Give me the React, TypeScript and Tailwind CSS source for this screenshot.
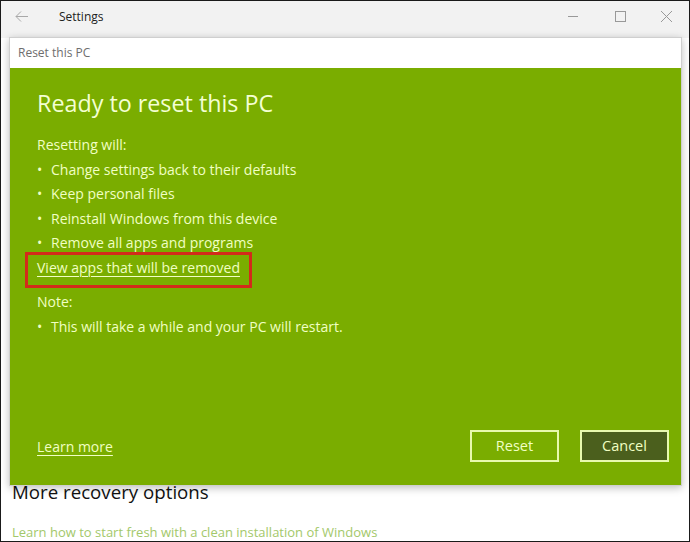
import { useState } from 'react';

const FONT = { fontFamily: '"Open Sans", "Noto Sans", sans-serif' };

const RESET_ITEMS = [
  'Change settings back to their defaults',
  'Keep personal files',
  'Reinstall Windows from this device',
  'Remove all apps and programs',
];

function Bullet({ children }: { children: React.ReactNode }) {
  return (
    <li className="flex">
      <span className="w-[14px] shrink-0">•</span>
      <span>{children}</span>
    </li>
  );
}

function TitleBar() {
  return (
    <div className="h-[37px] flex items-start bg-[#f2f2f2] shrink-0">
      <div className="h-[31px] w-full flex items-center">
        <svg width="46" height="31" viewBox="0 0 46 31" className="shrink-0">
          <path d="M15 15.5h12M15 15.5l5-5M15 15.5l5 5" stroke="#a8a8a8" strokeWidth="1" fill="none" />
        </svg>
        <span className="ml-[12px] text-[12px] text-[#222]">Settings</span>
        <div className="ml-auto flex items-center h-full">
          <svg width="46" height="31" viewBox="0 0 46 31">
            <path d="M17 15.5h10" stroke="#999" strokeWidth="1" />
          </svg>
          <svg width="46" height="31" viewBox="0 0 46 31">
            <rect x="18.5" y="10.5" width="10" height="10" stroke="#999" strokeWidth="1" fill="none" />
          </svg>
          <svg width="46" height="31" viewBox="0 0 46 31">
            <path d="M18 10l11 11M29 10L18 21" stroke="#999" strokeWidth="1" />
          </svg>
        </div>
      </div>
    </div>
  );
}

function ResetDialog() {
  const [showApps, setShowApps] = useState(false);

  return (
    <div className="absolute left-[8px] top-[36px] w-[673px] h-[449px] flex flex-col border border-[#cfcfcf] shadow-[0_2px_8px_rgba(0,0,0,0.25)]">
      <div className="h-[30px] bg-white flex items-center px-[8px] text-[12px] text-[#6e6e6e] shrink-0">
        Reset this PC
      </div>

      <div className="flex-1 flex flex-col bg-[#7aad00] text-[#f1ffc4] pl-[27px] pr-[12px] pt-[19px] pb-[23px]">
        <h1 className="text-[23.3px] leading-[32px] font-normal text-[#f4ffd2]">Ready to reset this PC</h1>

        <div className="mt-[14px] text-[14px] leading-[24.5px]">
          <p>Resetting will:</p>
          <ul>
            {RESET_ITEMS.map((item) => (
              <Bullet key={item}>{item}</Bullet>
            ))}
          </ul>
          <button
            onClick={() => setShowApps(!showApps)}
            className="relative inline-block underline underline-offset-[3px] decoration-1 mb-[10px]"
          >
            View apps that will be removed
            <span className="absolute -left-[12px] -right-[12px] -top-[4px] -bottom-[8px] border-[3px] border-[#d32a1b]" />
          </button>
          <p>Note:</p>
          <ul>
            <Bullet>This will take a while and your PC will restart.</Bullet>
          </ul>
        </div>

        <div className="mt-auto flex items-center">
          <a href="#" className="text-[14px] underline underline-offset-[3px] decoration-1">
            Learn more
          </a>
          <div className="ml-auto flex gap-[21px]">
            <button className="w-[89px] h-[32px] border-2 border-[#e8f9ae] text-[14.5px] text-[#f1ffc4]">
              Reset
            </button>
            <button className="w-[89px] h-[32px] border-2 border-[#e8f9ae] bg-[#4b5f1d] text-[14.5px] text-[#f1ffc4]">
              Cancel
            </button>
          </div>
        </div>
      </div>
    </div>
  );
}

export default function App() {
  return (
    <div style={FONT} className="relative w-[690px] h-[542px] overflow-hidden border border-[#1a1a1a] bg-white flex flex-col">
      <TitleBar />
      <div className="flex-1 px-[11px] pt-[441px]">
        <h2 className="text-[18.7px] leading-[26px] text-[#111]">More recovery options</h2>
        <a href="#" className="block mt-[18px] text-[13px] text-[#a3c86a]">
          Learn how to start fresh with a clean installation of Windows
        </a>
      </div>
      <ResetDialog />
    </div>
  );
}
